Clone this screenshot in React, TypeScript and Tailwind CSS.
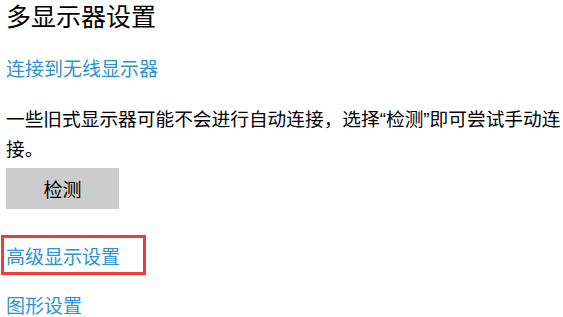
const LINK = 'text-[#2b93d1]';
const QUOTE = 'font-["Liberation_Sans"]';

export default function App() {
  return (
    <div
      className="min-h-screen overflow-hidden bg-white pl-[6px] text-black"
      style={{ fontFamily: '"Noto Sans CJK SC", "Noto Sans", sans-serif' }}
    >
      <h1 className="text-[25px] leading-[30px] font-normal">多显示器设置</h1>

      <a className={`mt-[24px] block text-[19px] leading-[28px] ${LINK}`}>连接到无线显示器</a>

      <p className="mt-[22px] text-[18.7px] leading-[28px] whitespace-nowrap">
        一些旧式显示器可能不会进行自动连接，选择<span className={QUOTE}>“</span>检测
        <span className={QUOTE}>”</span>即可尝试手动连
        <br />
        接。
      </p>

      <button className="mt-[6px] flex h-[41px] w-[113px] items-center justify-center bg-[#cccccc] text-[19px] leading-[28px]">
        检测
      </button>

      <div className="relative mt-[33px] w-fit">
        <a className={`block text-[19px] leading-[28px] ${LINK}`}>高级显示设置</a>
        <span className="pointer-events-none absolute left-[-5px] top-[-7px] h-[40px] w-[145px] border-[3px] border-[#ef3b3b]" />
      </div>

      <a className={`mt-[21px] block text-[19px] leading-[28px] ${LINK}`}>图形设置</a>
    </div>
  );
}
